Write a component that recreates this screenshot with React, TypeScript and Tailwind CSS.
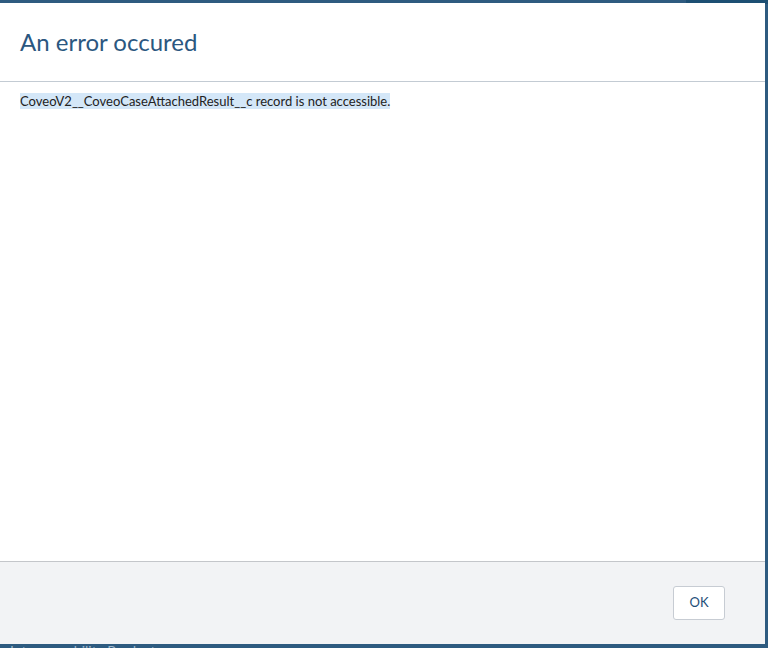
export default function App() {
  return (
    <div
      className="relative w-[768px] h-[648px] overflow-hidden bg-[#2e5b80]"
      style={{ fontFamily: "Lato, 'Liberation Sans', sans-serif" }}
    >
      {/* page behind the modal */}
      <div className="absolute inset-x-0 top-[-12px] flex h-[16px] items-end text-[14px] text-[#9fb6ca]">
        <span className="ml-[68px]">Open - Glass</span>
        <span className="ml-[112px]">Active - Tech</span>
        <span className="ml-[66px]">Active - Escal</span>
        <span className="ml-[60px]">Pending - AW</span>
        <span className="ml-[46px]">Pending - AW</span>
        <span className="ml-[30px] h-full w-[110px] bg-[#1d4f73]" />
      </div>
      <div className="absolute left-[10px] top-[640px] text-[14px] text-[#9fb6ca]">
        Interoperability Product
      </div>

      {/* modal */}
      <div className="absolute left-0 top-[3px] flex h-[641px] w-[765px] flex-col bg-white">
        <div className="h-[79px] shrink-0 border-b border-[#c3cbd3] px-[20px] pt-[24px]">
          <h2 className="text-[24px] leading-[30px] text-[#2b5780]">An error occured</h2>
        </div>
        <div className="flex-1 px-[20px] pt-[10px]">
          <p className="text-[13px] leading-[19px] text-[#222]">
            <span className="bg-[#d4e7f8]">
              CoveoV2__CoveoCaseAttachedResult__c record is not accessible.
            </span>
          </p>
        </div>
        <div className="flex h-[83px] shrink-0 items-start justify-end border-t border-[#c4c6ca] bg-[#f2f3f5] pr-[40px] pt-[24px]">
          <button className="h-[34px] w-[52px] rounded-[3px] border border-[#c7ccd3] bg-white text-[13px] text-[#1d4e78]">
            OK
          </button>
        </div>
      </div>
    </div>
  );
}
